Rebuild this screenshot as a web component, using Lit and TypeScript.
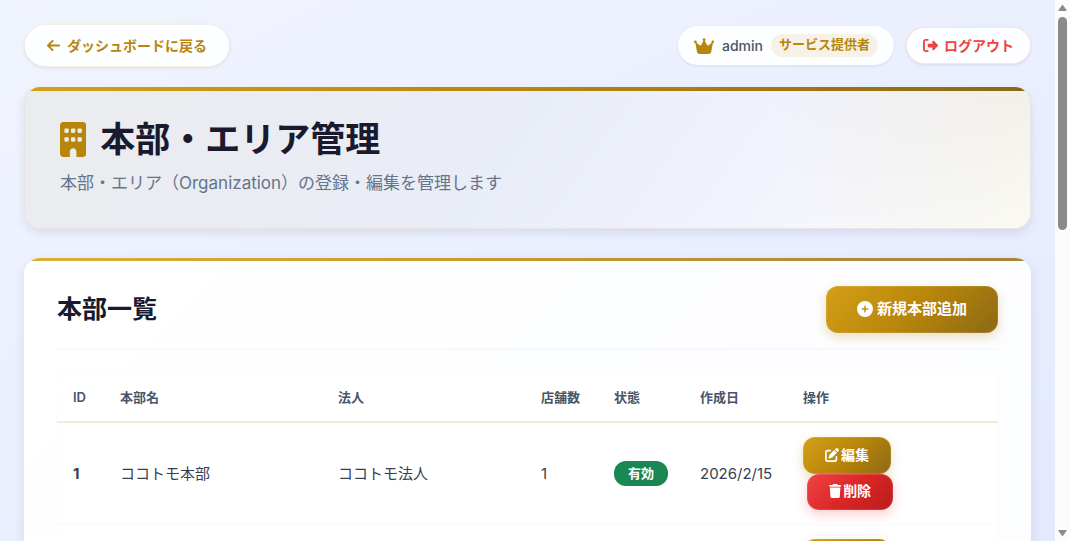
import { LitElement, html, css, svg } from "lit";
import { customElement, property } from "lit/decorators.js";

interface Glyph {
  box: string;
  path: string;
}

const ICONS: Record<string, Glyph> = {
  back: {
    box: "0 0 448 512",
    path: "M9.4 233.4c-12.5 12.5-12.5 32.8 0 45.3l160 160c12.5 12.5 32.8 12.5 45.3 0s12.5-32.8 0-45.3L109.2 288 416 288c17.7 0 32-14.3 32-32s-14.3-32-32-32l-306.7 0L214.6 118.6c12.5-12.5 12.5-32.8 0-45.3s-32.8-12.5-45.3 0l-160 160z",
  },
  crown: {
    box: "0 0 576 512",
    path: "M309 106c11.4-7 19-19.7 19-34c0-22.1-17.9-40-40-40s-40 17.9-40 40c0 14.4 7.6 27 19 34L209.7 220.6c-9.1 18.2-32.7 23.4-48.6 10.7L72 160c5-6.7 8-15 8-24c0-22.1-17.9-40-40-40S0 113.9 0 136s17.9 40 40 40c.2 0 .5 0 .7 0L86.4 427.4c5.5 30.4 32 52.6 63 52.6l277.2 0c30.9 0 57.4-22.1 63-52.6L535.3 176c.2 0 .5 0 .7 0c22.1 0 40-17.9 40-40s-17.9-40-40-40s-40 17.9-40 40c0 9 3 17.3 8 24l-89.1 71.3c-15.9 12.7-39.5 7.5-48.6-10.7L309 106z",
  },
  logout: {
    box: "0 0 512 512",
    path: "M377.9 105.9L500.7 228.7c7.2 7.2 11.3 17.1 11.3 27.3s-4.1 20.1-11.3 27.3L377.9 406.1c-6.4 6.4-15 9.9-24 9.9c-18.7 0-33.9-15.2-33.9-33.9l0-62.1-128 0c-17.7 0-32-14.3-32-32l0-64c0-17.7 14.3-32 32-32l128 0 0-62.1c0-18.7 15.2-33.9 33.9-33.9c9 0 17.6 3.6 24 9.9zM160 96L96 96c-17.7 0-32 14.3-32 32l0 256c0 17.7 14.3 32 32 32l64 0c17.7 0 32 14.3 32 32s-14.3 32-32 32l-64 0c-53 0-96-43-96-96L0 128C0 75 43 32 96 32l64 0c17.7 0 32 14.3 32 32s-14.3 32-32 32z",
  },
  building: {
    box: "0 0 384 512",
    path: "M48 0C21.5 0 0 21.5 0 48L0 464c0 26.5 21.5 48 48 48l96 0 0-80c0-26.5 21.5-48 48-48s48 21.5 48 48l0 80 96 0c26.5 0 48-21.5 48-48l0-416c0-26.5-21.5-48-48-48L48 0zM64 240c0-8.8 7.2-16 16-16l32 0c8.8 0 16 7.2 16 16l0 32c0 8.8-7.2 16-16 16l-32 0c-8.8 0-16-7.2-16-16l0-32zm112-16l32 0c8.8 0 16 7.2 16 16l0 32c0 8.8-7.2 16-16 16l-32 0c-8.8 0-16-7.2-16-16l0-32c0-8.8 7.2-16 16-16zm80 16c0-8.8 7.2-16 16-16l32 0c8.8 0 16 7.2 16 16l0 32c0 8.8-7.2 16-16 16l-32 0c-8.8 0-16-7.2-16-16l0-32zM80 96l32 0c8.8 0 16 7.2 16 16l0 32c0 8.8-7.2 16-16 16l-32 0c-8.8 0-16-7.2-16-16l0-32c0-8.8 7.2-16 16-16zm80 16c0-8.8 7.2-16 16-16l32 0c8.8 0 16 7.2 16 16l0 32c0 8.8-7.2 16-16 16l-32 0c-8.8 0-16-7.2-16-16l0-32zM272 96l32 0c8.8 0 16 7.2 16 16l0 32c0 8.8-7.2 16-16 16l-32 0c-8.8 0-16-7.2-16-16l0-32c0-8.8 7.2-16 16-16z",
  },
  plus: {
    box: "0 0 512 512",
    path: "M256 512A256 256 0 1 0 256 0a256 256 0 1 0 0 512zM232 344l0-64-64 0c-13.3 0-24-10.7-24-24s10.7-24 24-24l64 0 0-64c0-13.3 10.7-24 24-24s24 10.7 24 24l0 64 64 0c13.3 0 24 10.7 24 24s-10.7 24-24 24l-64 0 0 64c0 13.3-10.7 24-24 24s-24-10.7-24-24z",
  },
  edit: {
    box: "0 0 512 512",
    path: "M471.6 21.7c-21.9-21.9-57.3-21.9-79.2 0L362.3 51.7l97.9 97.9 30.1-30.1c21.9-21.9 21.9-57.3 0-79.2L471.6 21.7zm-299.2 220c-6.1 6.1-10.8 13.6-13.5 21.9l-29.6 88.8c-2.9 8.6-.6 18.1 5.8 24.6s15.9 8.7 24.6 5.8l88.8-29.6c8.2-2.7 15.7-7.4 21.9-13.5L437.7 172.3 339.7 74.3 172.4 241.7zM96 64C43 64 0 107 0 160L0 416c0 53 43 96 96 96l256 0c53 0 96-43 96-96l0-96c0-17.7-14.3-32-32-32s-32 14.3-32 32l0 96c0 17.7-14.3 32-32 32L96 448c-17.7 0-32-14.3-32-32l0-256c0-17.7 14.3-32 32-32l96 0c17.7 0 32-14.3 32-32s-14.3-32-32-32L96 64z",
  },
  trash: {
    box: "0 0 448 512",
    path: "M135.2 17.7L128 32 32 32C14.3 32 0 46.3 0 64S14.3 96 32 96l384 0c17.7 0 32-14.3 32-32s-14.3-32-32-32l-96 0-7.2-14.3C307.4 6.8 296.3 0 284.2 0L163.8 0c-12.1 0-23.2 6.8-28.6 17.7zM416 128L32 128 53.2 467c1.6 25.3 22.6 45 47.9 45l245.8 0c25.3 0 46.3-19.7 47.9-45L416 128z",
  },
};

@customElement("ui-icon")
class UiIcon extends LitElement {
  @property() name = "";

  static styles = css`
    :host {
      display: inline-flex;
      flex: none;
    }
    .glyph {
      display: block;
      height: 100%;
      width: auto;
      fill: currentColor;
    }
  `;

  render() {
    const icon = ICONS[this.name];
    return html`<svg class="glyph" viewBox=${icon.box} aria-hidden="true">
      ${svg`<path d=${icon.path}></path>`}
    </svg>`;
  }
}

interface Organization {
  id: string;
  name: string;
  corporation: string;
  stores: string;
  status: string;
  created: string;
}

const ORGANIZATIONS: Organization[] = [
  {
    id: "1",
    name: "ココトモ本部",
    corporation: "ココトモ法人",
    stores: "1",
    status: "有効",
    created: "2026/2/15",
  },
  { id: "", name: "", corporation: "", stores: "", status: "", created: "" },
];

@customElement("app-root")
class AppRoot extends LitElement {
  static styles = css`
    :host {
      display: flex;
      height: 100vh;
      overflow: hidden;
      font-family: Inter, "Noto Sans CJK JP", sans-serif;
      color: #374151;
    }
    * {
      box-sizing: border-box;
    }
    .page {
      flex: 1;
      min-width: 0;
      overflow: hidden;
      padding: 24px;
      background: linear-gradient(
        155deg,
        #f0f4ff 0%,
        #eef1fe 28%,
        #e9efff 56%,
        #e4e9fe 100%
      );
    }

    .topbar {
      display: flex;
      align-items: center;
      justify-content: space-between;
      margin-bottom: 20px;
    }
    .session {
      display: flex;
      align-items: center;
      gap: 12px;
    }
    .pill {
      display: flex;
      align-items: center;
      gap: 8px;
      border-radius: 24px;
      background: #fdfeff;
      font-family: inherit;
      font-size: 14px;
      line-height: 20px;
      box-shadow: 0 1px 3px rgba(30, 41, 90, 0.1);
    }
    .back {
      gap: 7px;
      height: 43px;
      padding: 0 22px;
      border: 1px solid #f5f0e3;
      color: #b8860b;
      font-weight: 600;
      text-decoration: none;
    }
    .back ui-icon {
      height: 15px;
    }
    .user {
      height: 39px;
      padding: 0 16px;
      color: #475569;
      font-weight: 500;
    }
    .user ui-icon {
      height: 18px;
      color: #b8860b;
    }
    .role {
      padding: 0 8px 3px;
      border-radius: 12px;
      background: #f6f2e7;
      color: #b8860b;
      font-size: 13px;
      font-weight: 600;
    }
    .logout {
      gap: 6px;
      height: 37px;
      padding: 0 16px;
      border: 1px solid #fce4e8;
      color: #ef4444;
      font-weight: 600;
    }
    .logout ui-icon {
      height: 15px;
    }

    .hero {
      overflow: hidden;
      height: 142px;
      margin-bottom: 29px;
      border: 1px solid #e9e6e1;
      border-top: 0;
      border-radius: 16px;
      background: radial-gradient(
          circle at 100% 0,
          rgba(184, 160, 90, 0.12),
          rgba(184, 160, 90, 0) 260px
        ),
        linear-gradient(
          125deg,
          #ebecee 0%,
          #ebecf3 26%,
          #e9edf8 48%,
          #eff2fc 68%,
          #f6f7fc 82%,
          #fffffc 100%
        );
      box-shadow: 0 4px 8px rgba(30, 41, 90, 0.1);
    }
    .hero::before {
      content: "";
      display: block;
      height: 4px;
      background: linear-gradient(90deg, #d4a017, #b8860b 50%, #8b6914);
    }
    .hero-body {
      padding: 23px 35px;
    }
    .title {
      display: flex;
      align-items: center;
      gap: 14px;
      margin: 0 0 7px;
      color: #1a1a2e;
      font-size: 35px;
      font-weight: 700;
      line-height: 50px;
    }
    .title ui-icon {
      height: 35px;
      color: #b8860b;
    }
    .lead {
      margin: 0;
      color: #64748b;
      font-size: 17px;
      line-height: 24px;
    }

    .card {
      overflow: hidden;
      border-radius: 16px;
      background: linear-gradient(135deg, #ffffff, #fcfdff);
      box-shadow: 0 4px 12px rgba(30, 41, 90, 0.1);
    }
    .card::before {
      content: "";
      display: block;
      height: 3px;
      background: linear-gradient(90deg, #dbae3e, #c6992f 50%, #a5823c);
    }
    .card-body {
      padding: 25px 33px;
    }
    .card-head {
      display: flex;
      align-items: center;
      justify-content: space-between;
      padding-bottom: 15px;
      margin-bottom: 24px;
      border-bottom: 2px solid #f8f9fa;
    }
    .card-title {
      margin: 0;
      padding-bottom: 2px;
      color: #1a1a2e;
      font-size: 25px;
      font-weight: 700;
      line-height: 36px;
    }
    .btn {
      display: flex;
      align-items: center;
      justify-content: center;
      padding: 0;
      border: 0;
      border-radius: 12px;
      color: #fff;
      font-family: inherit;
      font-weight: 700;
    }
    .gold {
      background: linear-gradient(135deg, #d4a017, #b8860b 50%, #8b6914);
      box-shadow:
        0 4px 12px rgba(184, 134, 11, 0.28),
        inset 0 0 0 1px rgba(255, 255, 255, 0.12);
    }
    .red {
      background: linear-gradient(135deg, #ef4444, #dc2626 50%, #b91c1c);
      box-shadow:
        0 4px 12px rgba(239, 68, 68, 0.28),
        inset 0 0 0 1px rgba(255, 255, 255, 0.12);
    }
    .add {
      gap: 4px;
      height: 47px;
      padding: 0 31px 2px;
      font-size: 15px;
      line-height: 22px;
    }
    .add ui-icon {
      height: 16px;
    }

    .table {
      width: 100%;
      table-layout: fixed;
      border-collapse: separate;
      border-spacing: 0;
      border-radius: 12px;
      background: #fff;
      box-shadow: 0 0 1px rgba(30, 41, 90, 0.08);
    }
    .col-id {
      width: 47px;
    }
    .col-corp {
      width: 203px;
    }
    .col-stores {
      width: 73px;
    }
    .col-status {
      width: 86px;
    }
    .col-date {
      width: 103px;
    }
    .col-actions {
      width: 211px;
    }
    th {
      height: 49px;
      padding: 0 0 2px 16px;
      border-bottom: 2px solid #f5ead5;
      color: #475569;
      font-size: 13px;
      font-weight: 600;
      line-height: 20px;
      text-align: left;
      white-space: nowrap;
    }
    td {
      height: 102px;
      padding: 14px 0 14px 16px;
      border-bottom: 1px solid #f8f9fb;
      font-size: 15px;
      line-height: 22px;
      vertical-align: middle;
      white-space: nowrap;
    }
    .id {
      font-weight: 700;
    }
    .status {
      display: inline-block;
      padding: 0 14px 1px;
      border-radius: 12px;
      background: #198754;
      color: #fff;
      font-size: 13px;
      font-weight: 700;
      line-height: 24px;
    }
    .actions {
      display: flex;
      flex-direction: column;
      align-items: flex-start;
    }
    .small {
      gap: 2px;
      min-width: 88px;
      height: 37px;
      padding: 0 21px 2px;
      font-size: 14px;
      line-height: 20px;
    }
    .small ui-icon {
      height: 14px;
    }
    .red.small {
      min-width: 86px;
      height: 36px;
      margin-left: 4px;
    }

    .scroll {
      display: flex;
      flex: none;
      flex-direction: column;
      align-items: center;
      width: 15px;
      padding: 4px 0;
      background: #fcfcfc;
    }
    .arrow {
      width: 9px;
      height: 8px;
      fill: #8b8b8b;
    }
    .track {
      flex: 1;
      width: 9px;
      padding: 5px 0;
    }
    .thumb {
      height: 42%;
      border-radius: 5px;
      background: #8b8b8b;
    }
  `;

  private row(org: Organization) {
    return html`<tr>
      <td class="id">${org.id}</td>
      <td>${org.name}</td>
      <td>${org.corporation}</td>
      <td>${org.stores}</td>
      <td>
        ${org.status ? html`<span class="status">${org.status}</span>` : ""}
      </td>
      <td>${org.created}</td>
      <td>
        <div class="actions">
          <button class="btn gold small" type="button" aria-label="編集">
            <ui-icon name="edit"></ui-icon>${org.id ? "編集" : ""}
          </button>
          <button class="btn red small" type="button" aria-label="削除">
            <ui-icon name="trash"></ui-icon>${org.id ? "削除" : ""}
          </button>
        </div>
      </td>
    </tr>`;
  }

  render() {
    return html`
      <main class="page">
        <div class="topbar">
          <a class="pill back" href="#"
            ><ui-icon name="back"></ui-icon>ダッシュボードに戻る</a
          >
          <div class="session">
            <div class="pill user">
              <ui-icon name="crown"></ui-icon>
              <span>admin</span>
              <span class="role">サービス提供者</span>
            </div>
            <button class="pill logout" type="button">
              <ui-icon name="logout"></ui-icon>ログアウト
            </button>
          </div>
        </div>

        <header class="hero">
          <div class="hero-body">
            <h1 class="title">
              <ui-icon name="building"></ui-icon>本部・エリア管理
            </h1>
            <p class="lead">
              本部・エリア（Organization）の登録・編集を管理します
            </p>
          </div>
        </header>

        <section class="card">
          <div class="card-body">
            <div class="card-head">
              <h2 class="card-title">本部一覧</h2>
              <button class="btn gold add" type="button">
                <ui-icon name="plus"></ui-icon>新規本部追加
              </button>
            </div>
            <table class="table">
              <colgroup>
                <col class="col-id" />
                <col />
                <col class="col-corp" />
                <col class="col-stores" />
                <col class="col-status" />
                <col class="col-date" />
                <col class="col-actions" />
              </colgroup>
              <thead>
                <tr>
                  <th>ID</th>
                  <th>本部名</th>
                  <th>法人</th>
                  <th>店舗数</th>
                  <th>状態</th>
                  <th>作成日</th>
                  <th>操作</th>
                </tr>
              </thead>
              <tbody>
                ${ORGANIZATIONS.map((org) => this.row(org))}
              </tbody>
            </table>
          </div>
        </section>
      </main>
      <div class="scroll" aria-hidden="true">
        <svg class="arrow" viewBox="0 0 9 8">
          <path d="M4.5 0.5 L8.5 6 Q9 7 8 7 H1 Q0 7 0.5 6 Z"></path>
        </svg>
        <div class="track"><div class="thumb"></div></div>
        <svg class="arrow" viewBox="0 0 9 8">
          <path d="M4.5 7.5 L8.5 2 Q9 1 8 1 H1 Q0 1 0.5 2 Z"></path>
        </svg>
      </div>
    `;
  }
}
